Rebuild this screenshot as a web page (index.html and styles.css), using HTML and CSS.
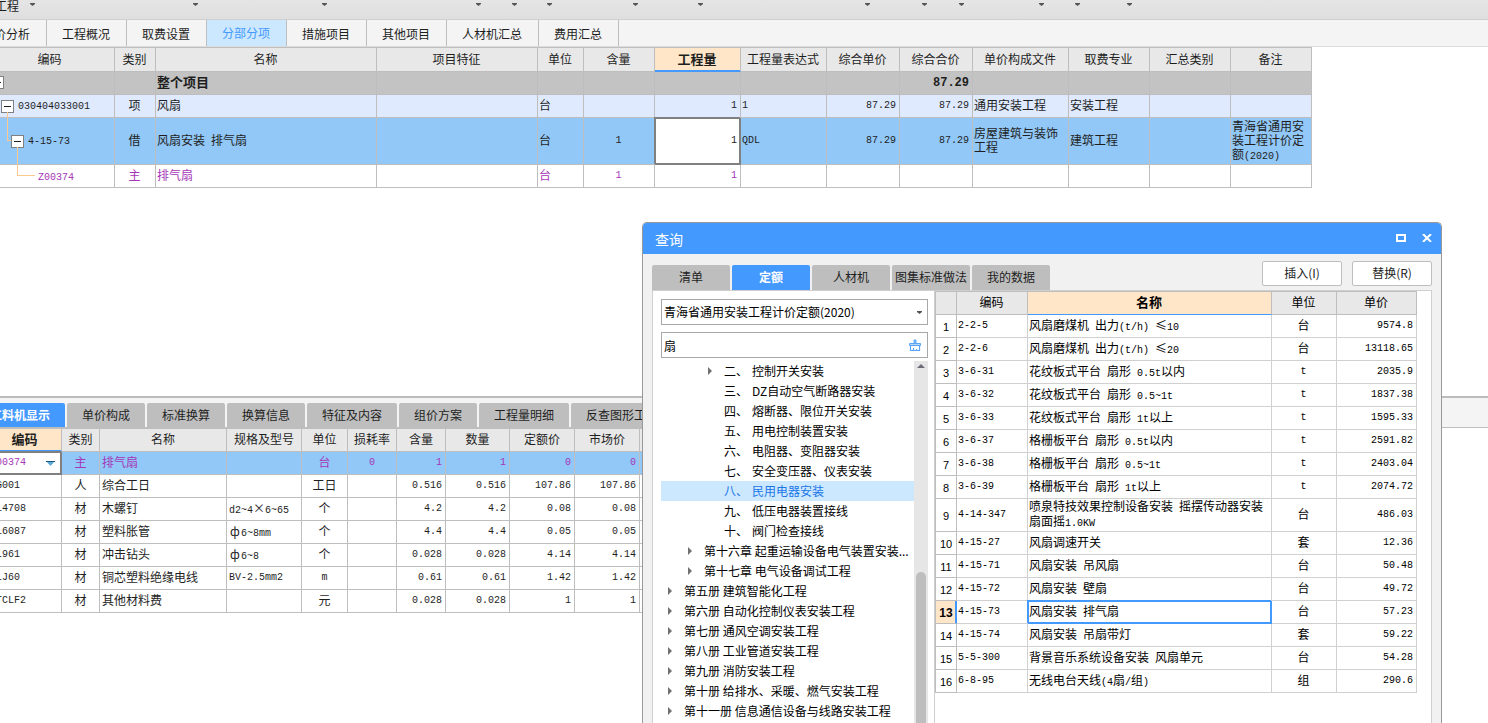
FILE: index.html
```html
<!DOCTYPE html>
<html lang="zh-CN">
<head>
<meta charset="utf-8">
<title>分部分项</title>
<link rel="stylesheet" href="styles.css">
</head>
<body>
<div class="app">
  <div class="ribbon">
    <button type="button">工程<span class="caret"></span></button>
    <button type="button" aria-label="菜单"><span class="caret"></span></button>
    <button type="button" aria-label="菜单"><span class="caret"></span></button>
    <button type="button" aria-label="菜单"><span class="caret"></span></button>
    <button type="button" aria-label="菜单"><span class="caret"></span></button>
    <button type="button" aria-label="菜单"><span class="caret"></span></button>
    <button type="button" aria-label="菜单"><span class="caret"></span></button>
    <button type="button" aria-label="菜单"><span class="caret"></span></button>
    <button type="button" aria-label="菜单"><span class="caret"></span></button>
    <button type="button" aria-label="菜单"><span class="caret"></span></button>
    <button type="button" aria-label="菜单"><span class="caret"></span></button>
    <button type="button" aria-label="菜单"><span class="caret"></span></button>
    <button type="button" aria-label="菜单"><span class="caret"></span></button>
    <button type="button" aria-label="菜单"><span class="caret"></span></button>
  </div>

  <nav class="page-tabs">
    <button type="button">造价分析</button>
    <button type="button">工程概况</button>
    <button type="button">取费设置</button>
    <button type="button" class="active">分部分项</button>
    <button type="button">措施项目</button>
    <button type="button">其他项目</button>
    <button type="button" class="wide">人材机汇总</button>
    <button type="button">费用汇总</button>
  </nav>

  <main class="upper">
    <table class="grid main-grid">
      <colgroup><col class="c129"><col class="c41"><col class="c221"><col class="c161"><col class="c46"><col class="c71"><col class="c86"><col class="c86"><col class="c73"><col class="c73"><col class="c96"><col class="c81"><col class="c81"><col class="c81"></colgroup>
      <thead>
        <tr><th>编码</th><th>类别</th><th>名称</th><th>项目特征</th><th>单位</th><th>含量</th><th class="current">工程量</th><th>工程量表达式</th><th>综合单价</th><th>综合合价</th><th>单价构成文件</th><th>取费专业</th><th>汇总类别</th><th>备注</th></tr>
      </thead>
      <tbody>
        <tr class="total"><td class="tree-cell level0"><button type="button" class="toggle" aria-label="折叠"></button></td><td></td><td>整个项目</td><td></td><td></td><td></td><td></td><td></td><td></td><td class="r">87.29</td><td></td><td></td><td></td><td></td></tr>
        <tr class="item"><td class="tree-cell level1"><button type="button" class="toggle" aria-label="折叠"></button><span class="m">030404033001</span></td><td class="c">项</td><td>风扇</td><td></td><td>台</td><td></td><td class="r m">1</td><td class="m">1</td><td class="r m">87.29</td><td class="r m">87.29</td><td>通用安装工程</td><td>安装工程</td><td></td><td></td></tr>
        <tr class="selected tall"><td class="tree-cell level2"><button type="button" class="toggle" aria-label="折叠"></button><span class="m">4-15-73</span></td><td class="c">借</td><td>风扇安装<span class="m"> </span>排气扇</td><td></td><td>台</td><td class="c m">1</td><td class="r m edit">1</td><td class="m">QDL</td><td class="r m">87.29</td><td class="r m">87.29</td><td>房屋建筑与装饰工程</td><td>建筑工程</td><td></td><td>青海省通用安装工程计价定额<span class="m">(2020)</span></td></tr>
        <tr class="material"><td class="tree-cell level3"><span class="m">Z00374</span></td><td class="c">主</td><td>排气扇</td><td></td><td>台</td><td class="c m">1</td><td class="r m">1</td><td></td><td></td><td></td><td></td><td></td><td></td><td></td></tr>
      </tbody>
    </table>
  </main>

  <section class="lower">
    <nav class="detail-tabs">
      <button type="button" class="tab wide active">工料机显示</button>
      <button type="button" class="tab">单价构成</button>
      <button type="button" class="tab">标准换算</button>
      <button type="button" class="tab">换算信息</button>
      <button type="button" class="tab wide">特征及内容</button>
      <button type="button" class="tab">组价方案</button>
      <button type="button" class="tab wide">工程量明细</button>
      <button type="button" class="tab xwide">反查图形工程量</button>
    </nav>
    <table class="grid detail-grid">
      <colgroup><col class="c74"><col class="c38"><col class="c127"><col class="c75"><col class="c46"><col class="c49"><col class="c49"><col class="c64"><col class="c65"><col class="c65"><col class="c86"></colgroup>
      <thead>
        <tr><th class="current">编码</th><th>类别</th><th>名称</th><th>规格及型号</th><th>单位</th><th>损耗率</th><th>含量</th><th>数量</th><th>定额价</th><th>市场价</th><th></th></tr>
      </thead>
      <tbody>
        <tr class="selected material"><td class="m edit combo">Z00374<svg class="combo-arrow" width="9" height="5" viewBox="0 0 9 5"><path d="M0 0H9L4.500 5Z" fill="#5aa9d8"/><path d="M0 0H9V1H0Z" fill="#1b5a80"/></svg></td><td class="c">主</td><td>排气扇</td><td></td><td class="c">台</td><td class="c m">0</td><td class="r m">1</td><td class="r m">1</td><td class="r m">0</td><td class="r m">0</td><td></td></tr>
        <tr><td class="m">RG001</td><td class="c">人</td><td>综合工日</td><td></td><td class="c">工日</td><td></td><td class="r m">0.516</td><td class="r m">0.516</td><td class="r m">107.86</td><td class="r m">107.86</td><td></td></tr>
        <tr><td class="m">CL4708</td><td class="c">材</td><td>木螺钉</td><td><span class="m">d2~4</span>×<span class="m">6~65</span></td><td class="c">个</td><td></td><td class="r m">4.2</td><td class="r m">4.2</td><td class="r m">0.08</td><td class="r m">0.08</td><td></td></tr>
        <tr><td class="m">CL6087</td><td class="c">材</td><td>塑料胀管</td><td><span class="symbol">ф</span><span class="m">6~8mm</span></td><td class="c">个</td><td></td><td class="r m">4.4</td><td class="r m">4.4</td><td class="r m">0.05</td><td class="r m">0.05</td><td></td></tr>
        <tr><td class="m">CL961</td><td class="c">材</td><td>冲击钻头</td><td><span class="symbol">ф</span><span class="m">6~8</span></td><td class="c">个</td><td></td><td class="r m">0.028</td><td class="r m">0.028</td><td class="r m">4.14</td><td class="r m">4.14</td><td></td></tr>
        <tr><td class="m">CLJ60</td><td class="c">材</td><td>铜芯塑料绝缘电线</td><td class="m">BV-2.5mm2</td><td class="c m">m</td><td></td><td class="r m">0.61</td><td class="r m">0.61</td><td class="r m">1.42</td><td class="r m">1.42</td><td></td></tr>
        <tr><td class="m">QTCLF2</td><td class="c">材</td><td>其他材料费</td><td></td><td class="c">元</td><td></td><td class="r m">0.028</td><td class="r m">0.028</td><td class="r m">1</td><td class="r m">1</td><td></td></tr>
      </tbody>
    </table>
  </section>

  <div class="dialog" role="dialog" aria-labelledby="dialog-title">
    <header class="title-bar">
      <h1 id="dialog-title">查询</h1>
      <button type="button" aria-label="最大化"><svg width="10" height="8" viewBox="0 0 10 8"><path d="M1 1H9V7H1Z" fill="none" stroke="#fff" stroke-width="2"/></svg></button>
      <button type="button" aria-label="关闭"><svg width="10" height="8" viewBox="0 0 10 8"><path d="M1 0L9 8M9 0L1 8" fill="none" stroke="#fff" stroke-width="2"/></svg></button>
    </header>
    <div class="dialog-tools">
      <nav class="dialog-tabs">
        <button type="button" class="tab">清单</button>
        <button type="button" class="tab active">定额</button>
        <button type="button" class="tab">人材机</button>
        <button type="button" class="tab">图集标准做法</button>
        <button type="button" class="tab">我的数据</button>
      </nav>
      <div class="actions">
        <button type="button">插入(I)</button>
        <button type="button">替换(R)</button>
      </div>
    </div>
    <div class="dialog-body">
      <aside class="catalog">
        <div class="field">
          <select aria-label="定额库"><option>青海省通用安装工程计价定额(2020)</option></select>
          <span class="caret"></span>
        </div>
        <div class="field">
          <input type="text" value="扇" aria-label="查找">
          <button type="button" class="clear" aria-label="清除"><svg width="14" height="14" viewBox="0 0 14 14"><path d="M6 5V2H8V5" fill="#8cc0fa" stroke="#5aa5f8"/><path d="M1.500 7.500V5.500H12.500V7.500Z" fill="#b5d7fc" stroke="#5aa5f8"/><path d="M2.500 7.500V12.500H11.500V7.500M5.500 12V10M8.500 12V11" fill="none" stroke="#5aa5f8" stroke-width="1.200"/></svg></button>
        </div>
        <div class="tree-box">
          <ul class="tree">
            <li class="deep parent">二、<span>控制开关安装</span></li>
            <li class="deep">三、<span>DZ自动空气断路器安装</span></li>
            <li class="deep">四、<span>熔断器、限位开关安装</span></li>
            <li class="deep">五、<span>用电控制装置安装</span></li>
            <li class="deep">六、<span>电阻器、变阻器安装</span></li>
            <li class="deep">七、<span>安全变压器、仪表安装</span></li>
            <li class="deep chosen">八、<span>民用电器安装</span></li>
            <li class="deep">九、<span>低压电器装置接线</span></li>
            <li class="deep">十、<span>阀门检查接线</span></li>
            <li class="mid parent">第十六章 起重运输设备电气装置安装...</li>
            <li class="mid parent">第十七章 电气设备调试工程</li>
            <li class="parent">第五册 建筑智能化工程</li>
            <li class="parent">第六册 自动化控制仪表安装工程</li>
            <li class="parent">第七册 通风空调安装工程</li>
            <li class="parent">第八册 工业管道安装工程</li>
            <li class="parent">第九册 消防安装工程</li>
            <li class="parent">第十册 给排水、采暖、燃气安装工程</li>
            <li class="parent">第十一册 信息通信设备与线路安装工程</li>
          </ul>
          <div class="scrollbar"><span class="up"></span><span class="thumb"></span></div>
        </div>
      </aside>
      <div class="results">
        <table class="grid result-grid">
          <colgroup><col class="c22"><col class="c71"><col class="c244"><col class="c65"><col class="c80"></colgroup>
          <thead><tr><th></th><th>编码</th><th class="current">名称</th><th>单位</th><th>单价</th></tr></thead>
          <tbody>
            <tr><th>1</th><td class="m">2-2-5</td><td>风扇磨煤机<span class="m"> </span>出力<span class="m">(t/h) </span>≤<span class="m">10</span></td><td class="c">台</td><td class="r m">9574.8</td></tr>
            <tr><th>2</th><td class="m">2-2-6</td><td>风扇磨煤机<span class="m"> </span>出力<span class="m">(t/h) </span>≤<span class="m">20</span></td><td class="c">台</td><td class="r m">13118.65</td></tr>
            <tr><th>3</th><td class="m">3-6-31</td><td>花纹板式平台<span class="m"> </span>扇形<span class="m"> 0.5t</span>以内</td><td class="c m">t</td><td class="r m">2035.9</td></tr>
            <tr><th>4</th><td class="m">3-6-32</td><td>花纹板式平台<span class="m"> </span>扇形<span class="m"> 0.5~1t</span></td><td class="c m">t</td><td class="r m">1837.38</td></tr>
            <tr><th>5</th><td class="m">3-6-33</td><td>花纹板式平台<span class="m"> </span>扇形<span class="m"> 1t</span>以上</td><td class="c m">t</td><td class="r m">1595.33</td></tr>
            <tr><th>6</th><td class="m">3-6-37</td><td>格栅板平台<span class="m"> </span>扇形<span class="m"> 0.5t</span>以内</td><td class="c m">t</td><td class="r m">2591.82</td></tr>
            <tr><th>7</th><td class="m">3-6-38</td><td>格栅板平台<span class="m"> </span>扇形<span class="m"> 0.5~1t</span></td><td class="c m">t</td><td class="r m">2403.04</td></tr>
            <tr><th>8</th><td class="m">3-6-39</td><td>格栅板平台<span class="m"> </span>扇形<span class="m"> 1t</span>以上</td><td class="c m">t</td><td class="r m">2074.72</td></tr>
            <tr class="double"><th>9</th><td class="m">4-14-347</td><td>喷泉特技效果控制设备安装<span class="m"> </span>摇摆传动器安装扇面摇<span class="m">1.0KW</span></td><td class="c">台</td><td class="r m">486.03</td></tr>
            <tr><th>10</th><td class="m">4-15-27</td><td>风扇调速开关</td><td class="c">套</td><td class="r m">12.36</td></tr>
            <tr><th>11</th><td class="m">4-15-71</td><td>风扇安装<span class="m"> </span>吊风扇</td><td class="c">台</td><td class="r m">50.48</td></tr>
            <tr><th>12</th><td class="m">4-15-72</td><td>风扇安装<span class="m"> </span>壁扇</td><td class="c">台</td><td class="r m">49.72</td></tr>
            <tr class="picked"><th>13</th><td class="m">4-15-73</td><td class="focus">风扇安装<span class="m"> </span>排气扇</td><td class="c">台</td><td class="r m">57.23</td></tr>
            <tr><th>14</th><td class="m">4-15-74</td><td>风扇安装<span class="m"> </span>吊扇带灯</td><td class="c">套</td><td class="r m">59.22</td></tr>
            <tr><th>15</th><td class="m">5-5-300</td><td>背景音乐系统设备安装<span class="m"> </span>风扇单元</td><td class="c">台</td><td class="r m">54.28</td></tr>
            <tr><th>16</th><td class="m">6-8-95</td><td>无线电台天线<span class="m">(4</span>扇<span class="m">/</span>组<span class="m">)</span></td><td class="c">组</td><td class="r m">290.6</td></tr>
          </tbody>
        </table>
      </div>
    </div>
  </div>
</div>
</body>
</html>
```
FILE: styles.css
```css
* { box-sizing: border-box; }

body {
  margin: 0;
  font: 12px/14px "Noto Sans CJK SC", sans-serif;
  color: #1e1e1e;
  background: #fff;
}

button, input, select {
  font: inherit;
  color: inherit;
  margin: 0;
  padding: 0;
  border: 0;
  background: none;
}

.app {
  position: relative;
  display: flex;
  flex-direction: column;
  height: 100vh;
  overflow: hidden;
}

.caret {
  width: 5px;
  height: 3px;
  background: #555;
  clip-path: polygon(0 0, 100% 0, 100% 34%, 50% 100%, 0 34%);
}

/* Ribbon */
.ribbon {
  flex: none;
  display: grid;
  grid-template-columns: 35px 163px 129px 154px 36px 35px 86px 65px 167px 57px 37px 80px 36px 52px;
  height: 20px;
  background: linear-gradient(#e5e5e5, #dfdfdf);
  border-bottom: 1px solid #cfcfcf;
}
.ribbon button {
  display: flex;
  justify-content: flex-end;
  align-items: flex-start;
  gap: 11px;
  height: 13px;
  line-height: 11px;
  white-space: nowrap;
}
.ribbon .caret { flex: none; margin-top: 3px; }

/* Page tabs */
.page-tabs {
  flex: none;
  display: flex;
  height: 27px;
  margin-left: -34px;
  padding-left: 1px;
  background: #f4f4f4;
  border-bottom: 1px solid #dcdcdc;
}
.page-tabs button {
  width: 80px;
  height: 26px;
  padding: 2px 1px 0 0;
  border-right: 1px solid #bebebe;
}
.page-tabs .wide { width: 92px; }
.page-tabs .active { background: #cce8ff; color: #4499ff; padding-top: 0; }

/* Grids */
.grid {
  table-layout: fixed;
  border-collapse: separate;
  border-spacing: 0;
  border-top: 1px solid #bebebe;
}
.grid th, .grid td {
  height: 23px;
  padding: 0 2px 2px 1px;
  border-right: 1px solid #bebebe;
  border-bottom: 1px solid #bebebe;
  text-align: left;
  vertical-align: middle;
}
.grid thead th {
  background: #e8e8e8;
  font-weight: 400;
  text-align: center;
  white-space: nowrap;
}
.grid .r { text-align: right; padding-right: 3px; }
.grid .c { text-align: center; }
.grid .m { font-family: "Liberation Mono", monospace; font-size: 10px; white-space: pre; }
.grid td.m { padding-bottom: 0; }
.grid span.m { line-height: 10px; }
.grid thead .current {
  background: #ffe6c8;
  border-bottom-color: #4499ff;
  font-size: 13px;
  font-weight: 700;
}
.symbol { display: inline-block; width: 12px; text-align: center; }

.c22 { width: 21px; }
.c38 { width: 38px; }
.c41 { width: 41px; }
.c46 { width: 46px; }
.c49 { width: 49px; }
.c64 { width: 64px; }
.c65 { width: 65px; }
.c71 { width: 71px; }
.c73 { width: 73px; }
.c74 { width: 74px; }
.c75 { width: 75px; }
.c80 { width: 80px; }
.c81 { width: 81px; }
.c86 { width: 86px; }
.c96 { width: 96px; }
.c127 { width: 127px; }
.c129 { width: 129px; }
.c161 { width: 161px; }
.c221 { width: 221px; }
.c244 { width: 244px; }

.grid .selected { background: #92c8f7; }
.grid .material { color: #a536b8; }
.grid .edit {
  background: #fff;
  border-color: #808080;
  box-shadow: -1px -1px 0 #808080, inset 1px 1px 0 #808080, inset -1px -1px 0 #808080;
}

.upper { flex: 1; min-height: 0; overflow: hidden; }
.main-grid { width: 1326px; margin-left: -14px; }
.main-grid thead th { height: 24px; }
.main-grid thead .current, .detail-grid thead .current { box-shadow: inset 0 -1px 0 #4499ff; }
.main-grid .total { background: #c3c3c3; font-size: 13px; font-weight: 700; }
.main-grid .total .r { font-family: "Liberation Mono", monospace; font-size: 12px; padding-bottom: 0; }
.main-grid .item { background: #dfeaff; }
.main-grid .tall td { height: 47px; }

/* Tree column */
.grid .tree-cell { position: relative; white-space: nowrap; }
.tree-cell .toggle {
  position: relative;
  display: inline-block;
  width: 13px;
  height: 13px;
  margin-right: 4px;
  border: 1px solid #808080;
  background: linear-gradient(#1e1e1e, #1e1e1e) center / 7px 1px no-repeat #fff;
  vertical-align: middle;
}
.grid .level0 { padding-left: 5px; }
.grid .level1 { padding-left: 15px; }
.grid .level2 { padding-left: 25px; }
.grid .level3 { padding-left: 52px; }
.level2::before, .level3::before {
  content: "";
  position: absolute;
  top: -6px;
  bottom: 50%;
  border-left: 1px solid #fbc98d;
  border-bottom: 1px solid #fbc98d;
}
.level2::before { left: 21px; width: 4px; }
.level3::before { left: 31px; width: 17px; top: -18px; }

/* Lower panel */
.lower {
  flex: 0 0 327px;
  overflow: hidden;
  border-top: 2px solid #bcbcbc;
}
.tab {
  flex: none;
  width: 78px;
  height: 24px;
  padding-bottom: 1px;
  border-radius: 2px 2px 0 0;
  background: #bebebe;
  white-space: nowrap;
}
.tab.wide { width: 90px; }
.tab.xwide { width: 114px; }
.tab.active { background: #4499ff; color: #fff; font-weight: 700; }
.detail-tabs {
  display: flex;
  gap: 2px;
  margin-left: -25px;
  padding-top: 5px;
  background: #f4f4f4;
  border-bottom: 1px solid #bebebe;
}
.detail-grid { width: 738px; margin-left: -12px; }
.detail-grid th, .detail-grid td { padding-left: 2px; }
.detail-grid .combo { position: relative; }
.combo-arrow { position: absolute; right: 6px; top: 9px; }

/* Query dialog */
.dialog {
  position: absolute;
  left: 642px;
  right: 46px;
  top: 222px;
  bottom: 0;
  display: flex;
  flex-direction: column;
  border: 1px solid #999;
  border-bottom: 0;
  border-radius: 5px 5px 0 0;
  background: #f1f1f1;
  overflow: hidden;
}
.title-bar {
  flex: none;
  display: flex;
  align-items: center;
  gap: 16px;
  height: 31px;
  padding: 0 9px 1px 12px;
  background: #4499ff;
  color: #fff;
}
.title-bar h1 { flex: 1; margin: 0; padding-top: 2px; font-size: 14px; line-height: 20px; font-weight: 400; }
.title-bar button { width: 10px; height: 8px; line-height: 0; }
.title-bar svg { display: block; }

.dialog-tools {
  flex: none;
  display: flex;
  justify-content: space-between;
  align-items: flex-end;
  height: 36px;
  padding: 0 9px;
}
.dialog-tabs { display: flex; gap: 2px; }
.dialog-tabs .tab { height: 25px; padding-bottom: 2px; }
.actions { display: flex; gap: 10px; padding-bottom: 4px; }
.actions button {
  width: 80px;
  height: 25px;
  padding-bottom: 1px;
  border: 1px solid #bebebe;
  border-radius: 2px;
  background: #fff;
}

.dialog-body {
  flex: 1;
  min-height: 0;
  display: flex;
  margin: 0 9px;
  border: 1px solid #cfcfcf;
  border-bottom: 0;
  background: #fff;
}
.catalog {
  flex: none;
  display: flex;
  flex-direction: column;
  gap: 7px;
  width: 282px;
  padding: 8px 6px 0 8px;
  border-right: 1px solid #cfcfcf;
  color: #000;
}
.field {
  position: relative;
  flex: none;
  height: 26px;
  border: 1px solid #a8a8a8;
  background: #fff;
}
.field select, .field input {
  display: block;
  width: 100%;
  height: 24px;
  padding: 0 24px 0 2px;
  appearance: none;
  outline: 0;
}
.field .caret { position: absolute; right: 5px; top: 11px; }
.field .clear { position: absolute; right: 5px; top: 5px; width: 14px; height: 14px; }
.clear svg { display: block; }

.tree-box { flex: 1; min-height: 0; display: flex; margin-top: -4px; overflow: hidden; }
.tree { flex: 1; min-width: 0; margin: 0; padding: 0; list-style: none; }
.tree li {
  display: flex;
  height: 20px;
  padding-left: 7px;
  line-height: 20px;
  white-space: nowrap;
}
.tree li::before {
  content: "";
  flex: none;
  width: 4px;
  height: 8px;
  margin: 6px 12px 0 0;
}
.tree .parent::before { background: #707070; clip-path: polygon(0 0, 100% 50%, 0 100%); }
.tree .mid { padding-left: 27px; }
.tree .deep { padding-left: 47px; }
.tree .deep span { padding-left: 4px; }
.tree .chosen { background: #cce8ff; color: #1a75e8; }
.scrollbar {
  flex: none;
  display: flex;
  flex-direction: column;
  align-items: center;
  width: 14px;
  background: #e6e6e6;
}
.scrollbar .up { width: 8px; height: 4px; margin: 3px 0 204px; background: #6c6c78; clip-path: polygon(50% 0, 100% 100%, 0 100%); }
.scrollbar .thumb { flex: 1; width: 10px; border-radius: 5px 5px 0 0; background: #bebebe; }

.results { flex: 1; min-width: 0; overflow: hidden; color: #000; }
.result-grid { width: 482px; border-left: 1px solid #bebebe; }
.result-grid tbody td { border-color: #d0d0d0; }
.result-grid tbody th {
  padding: 1px 0 0;
  font: 400 11px/14px "Liberation Sans", sans-serif;
  text-align: center;
}
.result-grid .double td { height: 33px; }
.result-grid tbody .picked th {
  background: #ffe6c8;
  font-size: 12px;
  font-weight: 700;
  border-right-color: #4499ff;
  box-shadow: inset -1px 0 0 #4499ff;
}
.result-grid tbody .focus {
  border-color: #4499ff;
  box-shadow: -1px -1px 0 #4499ff, inset 1px 1px 0 #4499ff, inset -1px -1px 0 #4499ff;
}
```
